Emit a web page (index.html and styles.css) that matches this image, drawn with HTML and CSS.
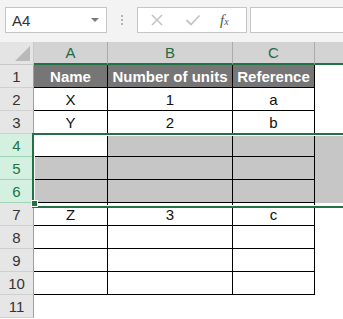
FILE: index.html
```html
<!DOCTYPE html>
<html lang="en">
<head>
  <meta charset="UTF-8">
  <title>Sheet</title>
  <link rel="stylesheet" href="styles.css">
</head>
<body>

<!-- Formula bar -->
<div class="toolbar">
  <div class="name-box">
    <span>A4</span>
    <span class="drop"></span>
  </div>
  <div class="dots"><i></i><i></i><i></i></div>
  <div class="fx-box">
    <svg class="ico" width="14" height="14" viewBox="0 0 14 14"><path d="M2 2 L12 12 M12 2 L2 12" stroke="#c4c4c4" stroke-width="1.6" fill="none"/></svg>
    <svg class="ico" width="16" height="14" viewBox="0 0 16 14"><path d="M1.5 7 L6 11.5 L14.5 2.5" stroke="#c4c4c4" stroke-width="1.8" fill="none"/></svg>
    <span class="fx">f<sub>x</sub></span>
  </div>
  <div class="formula"></div>
</div>

<!-- Sheet -->
<div class="sheet">
  <div class="corner"><span class="tri"></span></div>
  <div class="colhead">A</div>
  <div class="colhead">B</div>
  <div class="colhead">C</div>
  <div class="colhead last"></div>

  <div class="rowhead">1</div>
  <div class="cell th">Name</div>
  <div class="cell th">Number of units</div>
  <div class="cell th">Reference</div>
  <div class="blank"></div>

  <div class="rowhead">2</div>
  <div class="cell">X</div>
  <div class="cell">1</div>
  <div class="cell">a</div>
  <div class="blank"></div>

  <div class="rowhead">3</div>
  <div class="cell">Y</div>
  <div class="cell">2</div>
  <div class="cell">b</div>
  <div class="blank"></div>

  <div class="rowhead sel">4</div>
  <div class="cell"></div>
  <div class="cell shade"></div>
  <div class="cell shade"></div>
  <div class="blank shade"></div>

  <div class="rowhead sel">5</div>
  <div class="cell shade"></div>
  <div class="cell shade"></div>
  <div class="cell shade"></div>
  <div class="blank shade"></div>

  <div class="rowhead sel">6</div>
  <div class="cell shade"></div>
  <div class="cell shade"></div>
  <div class="cell shade"></div>
  <div class="blank shade"></div>

  <div class="rowhead">7</div>
  <div class="cell">Z</div>
  <div class="cell">3</div>
  <div class="cell">c</div>
  <div class="blank"></div>

  <div class="rowhead">8</div>
  <div class="cell"></div>
  <div class="cell"></div>
  <div class="cell"></div>
  <div class="blank"></div>

  <div class="rowhead">9</div>
  <div class="cell"></div>
  <div class="cell"></div>
  <div class="cell"></div>
  <div class="blank"></div>

  <div class="rowhead">10</div>
  <div class="cell"></div>
  <div class="cell"></div>
  <div class="cell"></div>
  <div class="blank"></div>

  <div class="rowhead">11</div>
  <div class="blank"></div>
  <div class="blank"></div>
  <div class="blank"></div>
  <div class="blank"></div>

  <!-- selection rows 4-6 -->
  <div class="selection"></div>
  <div class="handle"></div>
</div>

</body>
</html>
```

FILE: styles.css
```css
body {
  margin: 0;
  font-family: "Liberation Sans", Arial, sans-serif;
  background: #ffffff;
  overflow: hidden;
}

.toolbar {
  display: flex;
  align-items: center;
  height: 42px;
  background: #f3f3f3;
  padding: 0 0 2px 5px;
  box-sizing: border-box;
}

.name-box {
  width: 102px;
  height: 26px;
  box-sizing: border-box;
  border: 1px solid #c6c6c6;
  background: #fff;
  display: flex;
  align-items: center;
  justify-content: space-between;
  padding: 0 7px 0 6px;
  font-size: 15px;
  color: #333;
}

.drop {
  width: 0;
  height: 0;
  border-left: 4px solid transparent;
  border-right: 4px solid transparent;
  border-top: 4px solid #7a7a7a;
}

.dots {
  width: 30px;
  display: flex;
  flex-direction: column;
  align-items: center;
  gap: 2px;
}

.dots i {
  width: 2px;
  height: 2px;
  background: #b5b5b5;
}

.fx-box {
  width: 110px;
  height: 26px;
  box-sizing: border-box;
  border: 1px solid #c6c6c6;
  background: #fff;
  display: flex;
  align-items: center;
  padding-left: 12px;
  gap: 21px;
}

.fx {
  font-family: "Liberation Serif", serif;
  font-style: italic;
  font-size: 15px;
  color: #555;
  margin-left: -2px;
}

.fx sub {
  font-size: 10px;
  vertical-align: 0;
}

.formula {
  flex: 1;
  margin-left: 3px;
  height: 26px;
  box-sizing: border-box;
  border: 1px solid #c6c6c6;
  border-right: none;
  background: #fff;
}

.sheet {
  position: relative;
  display: grid;
  grid-template-columns: 34px 74px 125px 82px 1fr;
  grid-template-rows: 23px repeat(11, 23px);
  font-size: 15px;
}

.corner {
  background: #e4e4e4;
  border-right: 1px solid #c8c8c8;
  border-bottom: 1px solid #c8c8c8;
  position: relative;
}

.tri {
  position: absolute;
  right: 3px;
  bottom: 3px;
  width: 0;
  height: 0;
  border-left: 15px solid transparent;
  border-bottom: 15px solid #b9b9b9;
}

.colhead {
  background: #d3d3d3;
  border-right: 1px solid #ababab;
  border-bottom: 2px solid #217346;
  color: #1e6b45;
  display: flex;
  align-items: center;
  justify-content: center;
}

.colhead.last {
  border-right: none;
}

.rowhead {
  background: #e6e6e6;
  border-right: 1px solid #9e9e9e;
  border-bottom: 1px solid #d0d0d0;
  color: #333;
  display: flex;
  align-items: center;
  justify-content: center;
}

.rowhead.sel {
  background: #d3f0e0;
  color: #217346;
  border-bottom-color: #9fd5b7;
}

.cell {
  border-right: 1px solid #000;
  border-bottom: 1px solid #000;
  display: flex;
  align-items: center;
  justify-content: center;
  color: #111;
  padding-top: 1px;
  box-sizing: border-box;
}

.cell.th {
  background: #767676;
  color: #fff;
  font-weight: bold;
}

.shade {
  background: #c6c6c6;
}

.selection {
  position: absolute;
  left: 32px;
  right: -4px;
  top: 91px;
  height: 71px;
  border: 2px solid #217346;
  box-shadow: inset 0 0 0 1px #fff;
  pointer-events: none;
}

.handle {
  position: absolute;
  left: 31px;
  top: 158px;
  width: 5px;
  height: 5px;
  background: #217346;
  border: 1px solid #fff;
}
```
